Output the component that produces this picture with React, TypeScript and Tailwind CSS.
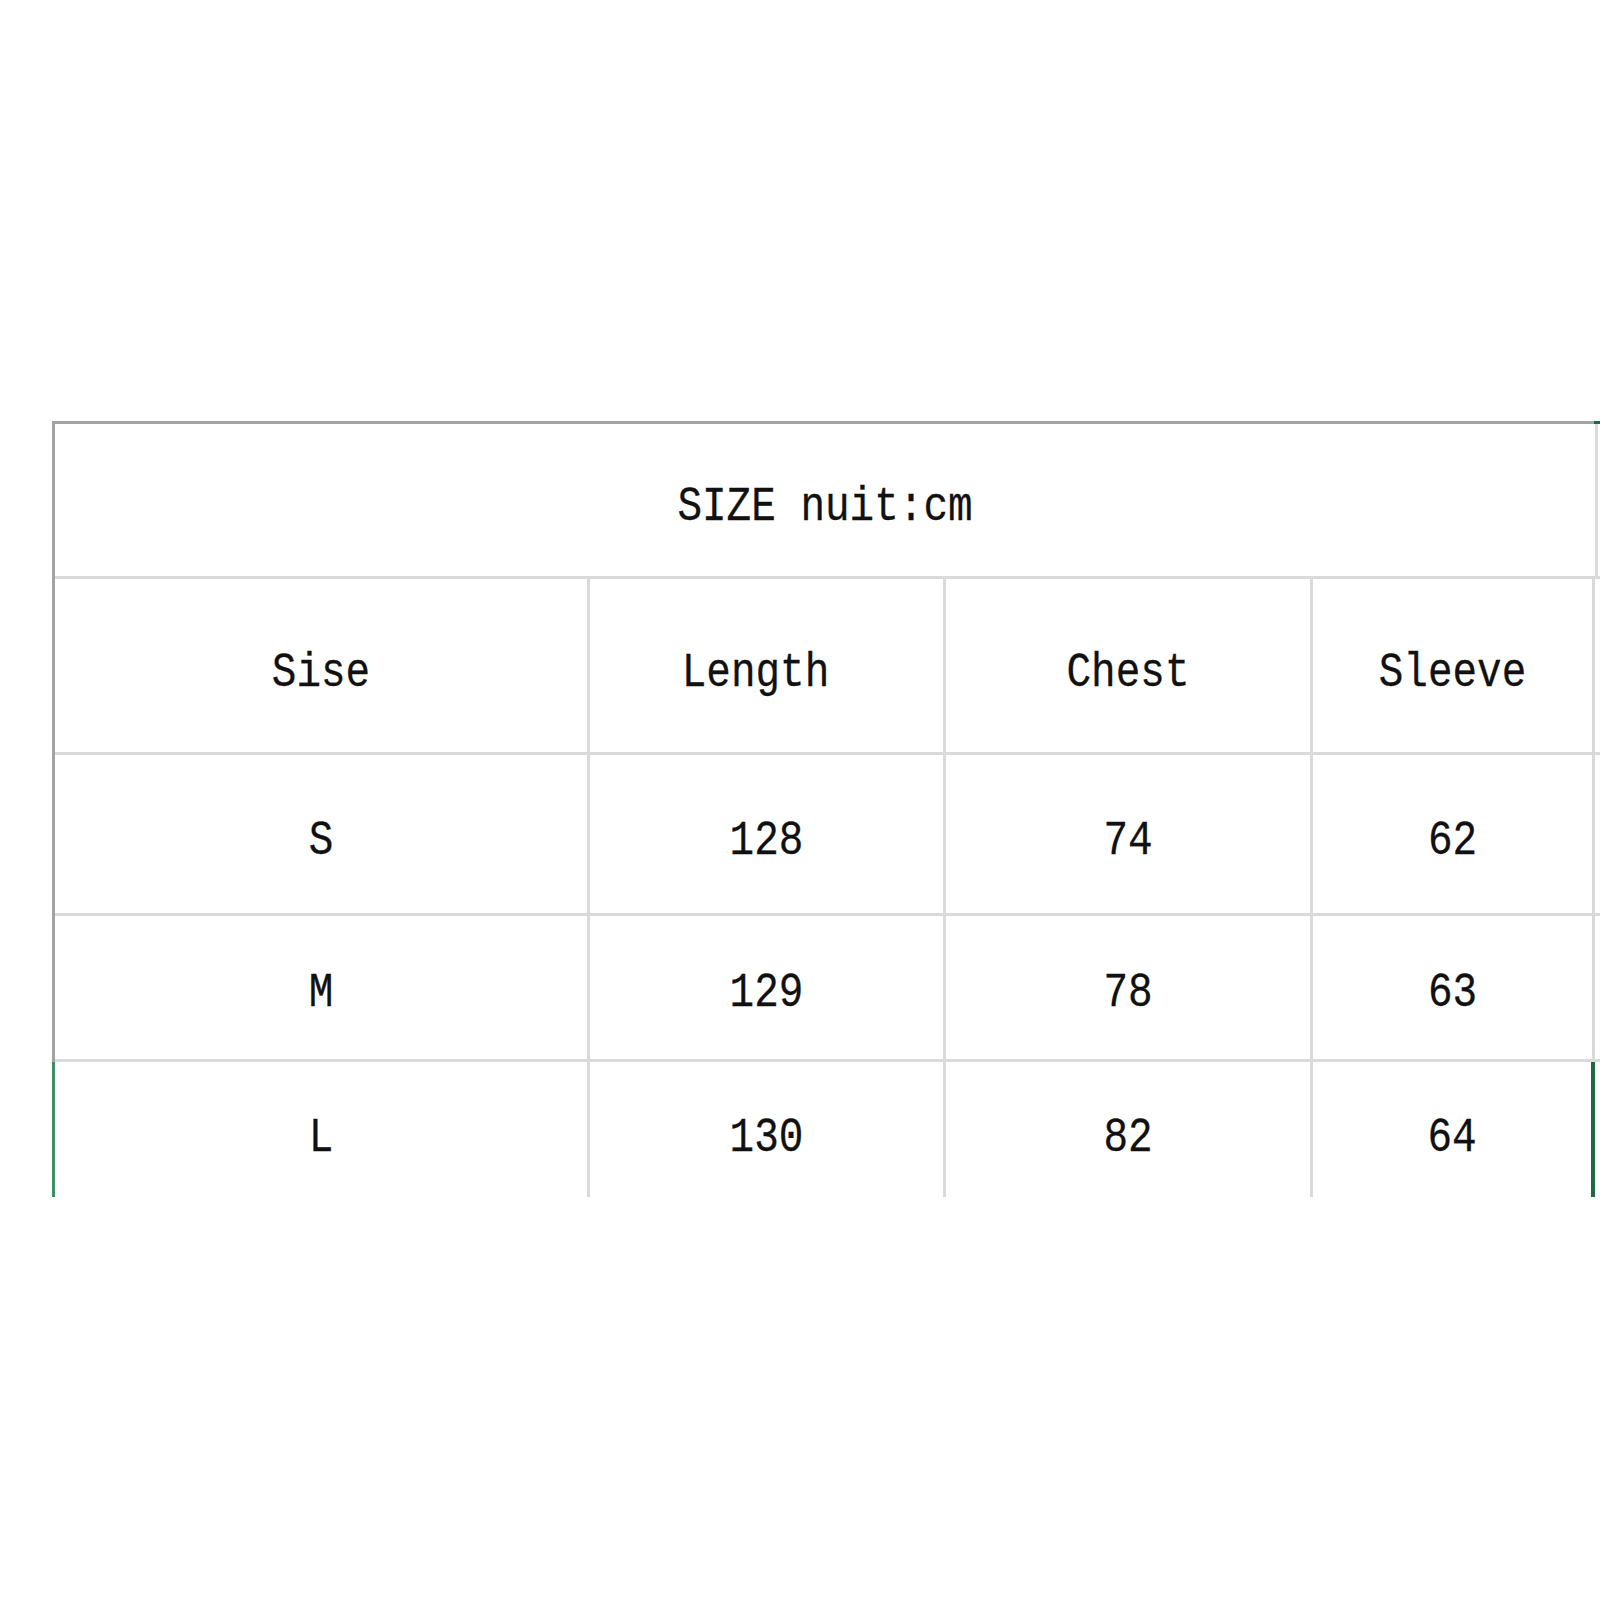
export default function App() {
  const header = ["Sise", "Length", "Chest", "Sleeve"];
  const body = [
    ["S", "128", "74", "62"],
    ["M", "129", "78", "63"],
    ["L", "130", "82", "64"],
  ];
  const colW = ["w-[535px]", "w-[356px]", "w-[367px]", "w-[282px]"];
  const rowH = ["h-[161px]", "h-[146px]", "h-[150px]"];
  const rowPt = ["pt-[14px]", "pt-[12px]", "pt-[6px]"];
  const T = ({ children }: { children: React.ReactNode }) => (
    <span className="inline-block scale-y-[1.15] font-['Liberation_Mono','Courier_New',monospace] text-[41px] leading-none text-[#111] [-webkit-text-stroke:0.25px_#111]">
      {children}
    </span>
  );
  return (
    <div className="relative h-[1600px] w-[1600px] overflow-hidden bg-white">
      <div className="pl-[52px] pt-[421px]">
        <div className="h-[776px] w-[1548px] overflow-hidden">
          {/* top border */}
          <div className="flex h-[3px]">
            <div className="w-[1542px] bg-[#a3a3a3]" />
            <div className="flex-1 bg-[#1d6b41]" />
          </div>
          {/* title row */}
          <div className="flex h-[155px]">
            <div className="w-[3px] bg-[#a3a3a3]" />
            <div className="flex w-[1540px] flex-col">
              <div className="flex flex-1 items-center justify-center pt-[14px]">
                <T>SIZE nuit:cm</T>
              </div>
              <div className="h-[3px] bg-[#dadada]" />
            </div>
            <div className="w-[3px] bg-[#dadada]" />
            <div className="flex flex-1 flex-col">
              <div className="flex-1" />
              <div className="h-[3px] bg-[#dadada]" />
            </div>
          </div>
          {/* header row */}
          <div className="flex h-[176px]">
            <div className="w-[3px] bg-[#a3a3a3]" />
            {header.map((h, i) => (
              <div key={h} className={`${colW[i]} flex flex-col border-r-[3px] border-[#dadada]`}>
                <div className={`flex flex-1 items-center justify-center pt-[16px] ${i === 1 ? "pr-[22px]" : ""}`}>
                  <T>{h}</T>
                </div>
                <div className="h-[3px] bg-[#dadada]" />
              </div>
            ))}
            <div className="flex flex-1 flex-col">
              <div className="flex-1" />
              <div className="h-[3px] bg-[#dadada]" />
            </div>
          </div>
          {body.map((r, ri) => {
            const last = ri === body.length - 1;
            return (
              <div key={r[0]} className={`flex ${rowH[ri]}`}>
                <div className={`w-[3px] ${last ? "bg-[#3f8f66]" : "bg-[#a3a3a3]"}`} />
                {r.map((c, i) => (
                  <div
                    key={i}
                    className={`${colW[i]} flex flex-col ${
                      last && i === 3 ? "border-r-[4px] border-[#1d6b41]" : "border-r-[3px] border-[#dadada]"
                    }`}
                  >
                    <div className={`flex flex-1 items-center justify-center ${rowPt[ri]}`}>
                      <T>{c}</T>
                    </div>
                    <div className="h-[3px] bg-[#dadada]" />
                  </div>
                ))}
                <div className="flex flex-1 flex-col">
                  <div className="flex-1" />
                  <div className="h-[3px] bg-[#dadada]" />
                </div>
              </div>
            );
          })}
        </div>
      </div>
    </div>
  );
}
